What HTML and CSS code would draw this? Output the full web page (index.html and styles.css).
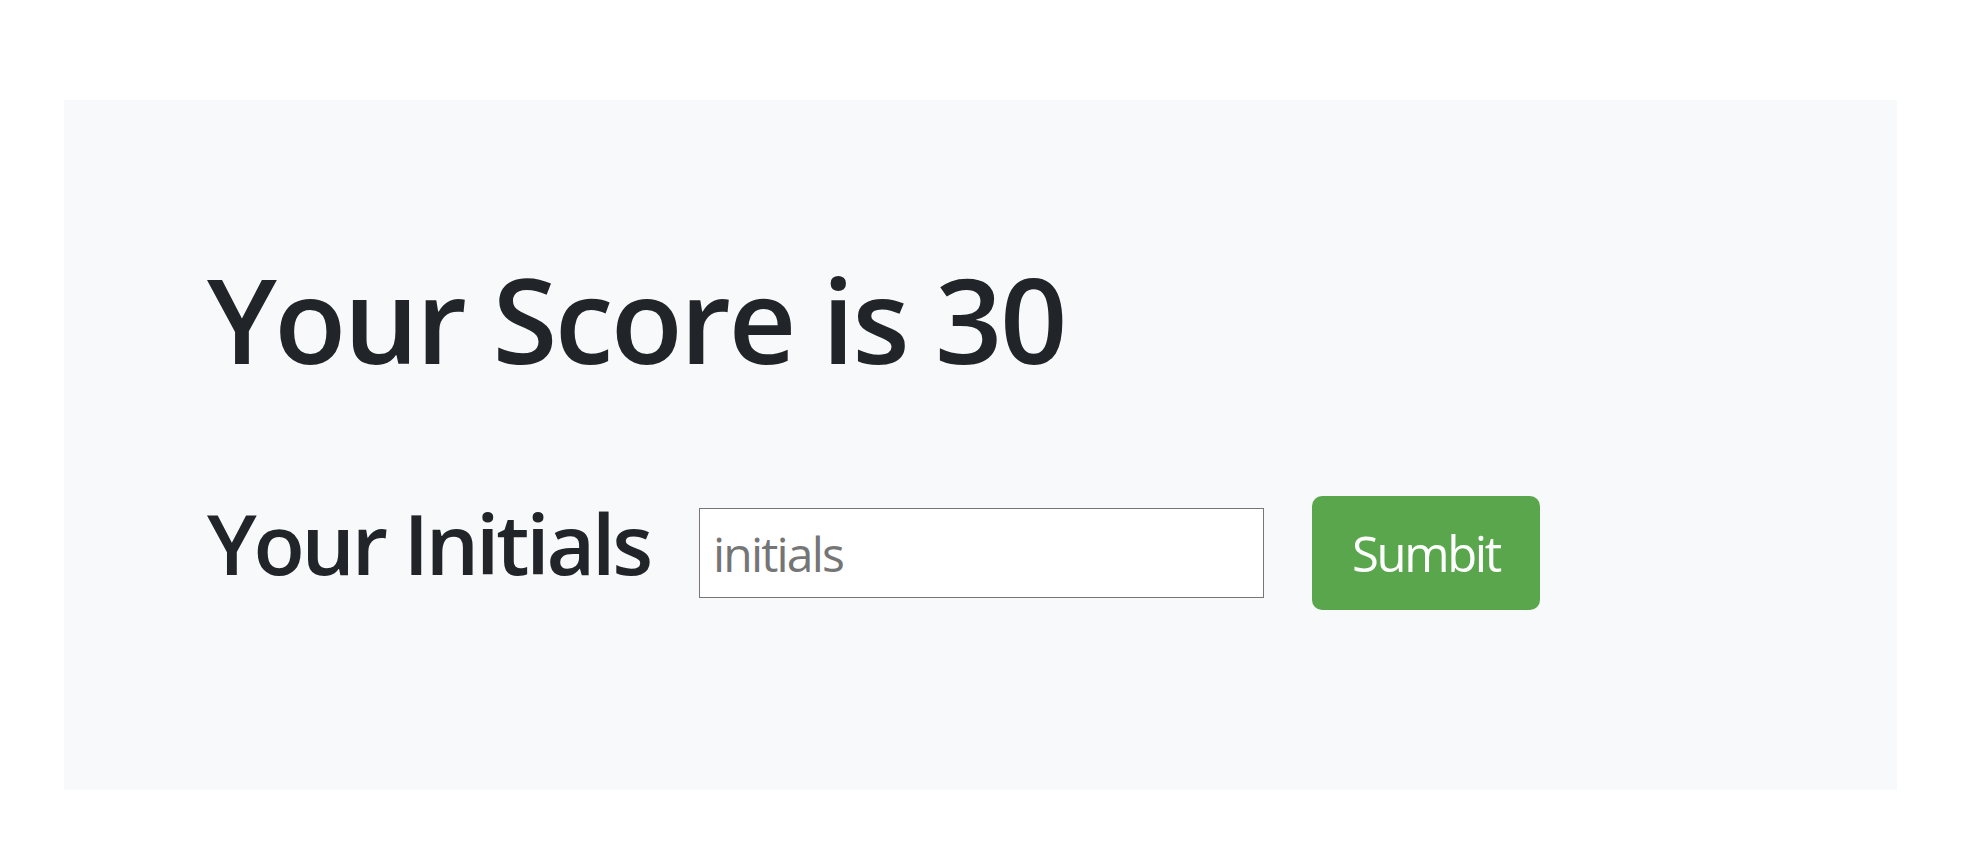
FILE: index.html
```html
<!DOCTYPE html>
<html lang="en">
<head>
<meta charset="utf-8">
<title>Score</title>
<link rel="stylesheet" href="styles.css">
</head>
<body>
<main class="jumbo">
  <h1 class="score">Your Score is 30</h1>
  <form class="initials-row">
    <label class="initials-label" for="initials">Your Initials</label>
    <input class="initials-input" id="initials" type="text" placeholder="initials">
    <button class="submit-btn" type="button">Sumbit</button>
  </form>
</main>
</body>
</html>
```

FILE: styles.css
```css
html, body {
  margin: 0;
  padding: 0;
  background: #ffffff;
}

body {
  font-family: "Open Sans", "Noto Sans", "Liberation Sans", sans-serif;
  color: #212529;
}

.jumbo {
  background: #f8f9fa;
  margin: 100px 68px 0 64px;
  height: 690px;
  box-sizing: border-box;
  padding: 160px 0 0 143px;
}

.score {
  margin: 0;
  font-size: 118px;
  font-weight: 600;
  line-height: 1;
  letter-spacing: -2.6px;
}

.initials-row {
  display: flex;
  align-items: center;
  margin-top: 118px;
}

.initials-label {
  font-size: 84px;
  font-weight: 600;
  line-height: 1;
  letter-spacing: -3.2px;
  margin-right: 49px;
  margin-bottom: 20px;
}

.initials-input {
  box-sizing: border-box;
  width: 565px;
  height: 90px;
  border: 1px solid #767676;
  border-radius: 0;
  background: #ffffff;
  padding: 0 13px;
  font-family: "Open Sans", "Noto Sans", sans-serif;
  font-size: 48px;
  letter-spacing: -1.8px;
  color: #212529;
  margin: 0;
}

.initials-input::placeholder {
  color: #757575;
}

.submit-btn {
  box-sizing: border-box;
  width: 228px;
  height: 114px;
  margin-left: 48px;
  border: none;
  border-radius: 10px;
  background: #59a64c;
  color: #ffffff;
  font-family: "Open Sans", "Noto Sans", sans-serif;
  font-size: 49px;
  letter-spacing: -2.4px;
  font-weight: 400;
  padding: 0;
}
```
